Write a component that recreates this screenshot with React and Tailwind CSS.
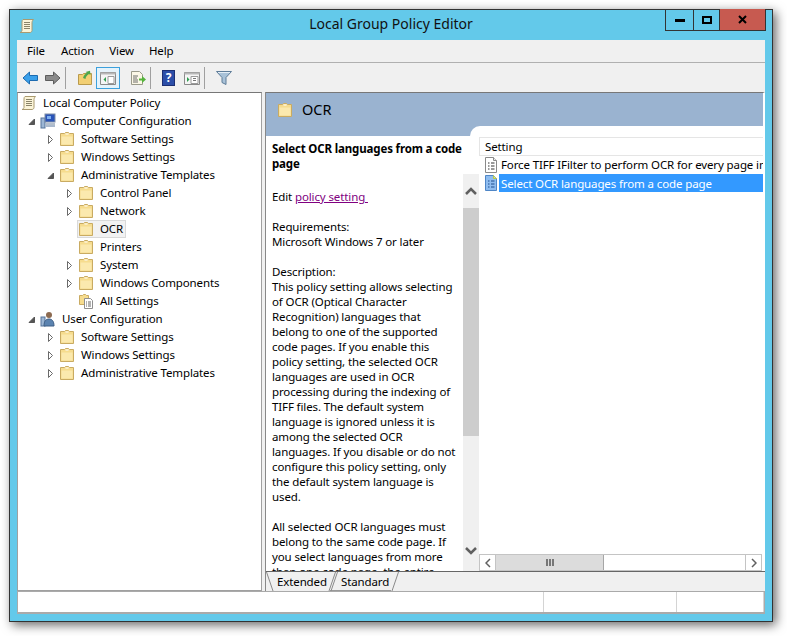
import React from 'react';

const Folder = ({ className = 'w-4 h-4 shrink-0' }) => (
  <svg viewBox="0 0 16 16" className={className}>
    <path d="M1.500 14.500v-12h4l1-1h3l1 1h4v12z" fill="#f6dc8e" stroke="#c9ab62" />
    <path d="M2.500 5.500h11v8h-11z" fill="#fbe9ae" />
    <path d="M6.500 2.500h3v1h-3z" fill="#fff" />
  </svg>
);

const Scroll = () => (
  <svg viewBox="0 0 16 16" className="w-4 h-4 shrink-0">
    <path d="M4 1.500h10.500c-1 1-1.500 2-1.500 3v8c0 1-1 2-2 2H1c1-.5 2-1 2-2V4c0-1 .2-2 1-2.500z" fill="#fbf4d8" stroke="#a99a70" />
    <path d="M5 4.500h6M5 6.500h6M5 8.500h6M5 10.500h6" stroke="#8a8468" />
  </svg>
);

const Computer = () => (
  <svg viewBox="0 0 16 16" className="w-4 h-4 shrink-0">
    <rect x="1" y="5" width="4" height="10" fill="#9cb6d4" stroke="#56759b" />
    <rect x="5" y="1" width="10" height="8" fill="#2a54b8" stroke="#7f8ea6" />
    <path d="M7 3h4v3H7z" fill="#7fb0f0" />
    <path d="M6 10h9v2H6z" fill="#b4bfcc" />
    <path d="M6 13h9" stroke="#56759b" />
  </svg>
);

const User = () => (
  <svg viewBox="0 0 16 16" className="w-4 h-4 shrink-0">
    <rect x="1" y="6" width="4" height="9" fill="#9cb6d4" stroke="#56759b" />
    <circle cx="9" cy="4" r="3" fill="#8c6a50" />
    <path d="M4 15c0-5 2-7 5-7s5 2 5 7z" fill="#5b83b0" stroke="#3f5f86" />
  </svg>
);

const AllSettings = () => (
  <svg viewBox="0 0 16 16" className="w-4 h-4 shrink-0">
    <path d="M1.500 11.500v-9h3l1-1h2l1 1h2v9z" fill="#f6dc8e" stroke="#c9ab62" />
    <path d="M6.500 5.500h6l2 2v8h-8z" fill="#fff" stroke="#8f8f8f" />
    <path d="M8 9h1M10 9h3M8 11h1M10 11h3M8 13h1M10 13h3" stroke="#666" />
  </svg>
);

const PolicyIcon = ({ selected }) => (
  <svg viewBox="0 0 16 18" className="w-4 h-[18px] shrink-0">
    <path d="M2.500 1.500h8l3 3v12h-11z" fill={selected ? '#8fbdf0' : '#fff'} stroke={selected ? '#4f86c6' : '#8a8a8a'} />
    <path d="M10.500 1.500v3h3" fill={selected ? '#e6f06a' : '#eee'} stroke={selected ? '#b8c84a' : '#8a8a8a'} />
    <path d="M5 7h1.500M8 7h3.500M5 10h1.500M8 10h3.500M5 13h1.500M8 13h3.500" stroke={selected ? '#1f4f8f' : '#333'} />
  </svg>
);

const Arrow = ({ state }) => (
  <span className="w-[9px] h-[9px] mr-[3px] flex items-center justify-center">
    {state === 'closed' && (
      <svg viewBox="0 0 9 9" className="w-[9px] h-[9px]">
        <path d="M2.500.500l4 4-4 4z" fill="#fff" stroke="#6a6a6a" />
      </svg>
    )}
    {state === 'open' && (
      <svg viewBox="0 0 9 9" className="w-[9px] h-[9px]">
        <path d="M7.500 2v5.500H2z" fill="#555" stroke="#555" />
      </svg>
    )}
  </span>
);

const depthClass = ['pl-[2px]', 'pl-[9px]', 'pl-[28px]', 'pl-[47px]'];

const TreeRow = ({ depth, arrow, icon, label, active }) => (
  <div className={`flex items-center h-[18px] ${depthClass[depth]}`}>
    {depth > 0 && <Arrow state={arrow} />}
    <span className={`flex items-center h-[18px] pr-[2px] border ${active ? 'bg-[#f2f2f2] border-[#d9d9d9]' : 'border-transparent'}`}>
      {icon}
      <span className="ml-[6px] leading-[16px]">{label}</span>
    </span>
  </div>
);

const tree = [
  { depth: 0, icon: <Scroll />, label: 'Local Computer Policy' },
  { depth: 1, arrow: 'open', icon: <Computer />, label: 'Computer Configuration' },
  { depth: 2, arrow: 'closed', icon: <Folder />, label: 'Software Settings' },
  { depth: 2, arrow: 'closed', icon: <Folder />, label: 'Windows Settings' },
  { depth: 2, arrow: 'open', icon: <Folder />, label: 'Administrative Templates' },
  { depth: 3, arrow: 'closed', icon: <Folder />, label: 'Control Panel' },
  { depth: 3, arrow: 'closed', icon: <Folder />, label: 'Network' },
  { depth: 3, icon: <Folder />, label: 'OCR', active: true },
  { depth: 3, icon: <Folder />, label: 'Printers' },
  { depth: 3, arrow: 'closed', icon: <Folder />, label: 'System' },
  { depth: 3, arrow: 'closed', icon: <Folder />, label: 'Windows Components' },
  { depth: 3, icon: <AllSettings />, label: 'All Settings' },
  { depth: 1, arrow: 'open', icon: <User />, label: 'User Configuration' },
  { depth: 2, arrow: 'closed', icon: <Folder />, label: 'Software Settings' },
  { depth: 2, arrow: 'closed', icon: <Folder />, label: 'Windows Settings' },
  { depth: 2, arrow: 'closed', icon: <Folder />, label: 'Administrative Templates' },
];

const Sep = ({ className }) => <div className={`w-px h-[22px] bg-[#a0a0a0] ${className}`} />;

const Toolbar = () => (
  <div className="flex items-center h-[29px] pl-[5px]">
    <svg viewBox="0 0 16 14" className="w-4 h-[14px]">
      <path d="M7.500 1L1 7l6.500 6V9.500h8v-5h-8z" fill="#3aa0ea" stroke="#1c6bb0" />
    </svg>
    <svg viewBox="0 0 16 14" className="w-4 h-[14px] ml-[7px]">
      <path d="M8.500 1L15 7l-6.500 6V9.500h-8v-5h8z" fill="#8a8a8a" stroke="#5c5c5c" />
    </svg>
    <Sep className="ml-[4px]" />
    <svg viewBox="0 0 16 16" className="w-4 h-4 ml-[11px]">
      <path d="M1.500 14.500v-10h4l1-1h8v11z" fill="#f2cf73" stroke="#b99a4c" />
      <path d="M6 8c1-3 2-4 4-5L8.500 2 13 .8 13.500 5 12 4c-2 1-3.500 3-3.500 5z" fill="#4ca64c" />
    </svg>
    <div className="flex items-center justify-center w-[24px] h-[22px] ml-[3px] bg-[#e5f3fb] border border-[#3ca0dc]">
      <svg viewBox="0 0 16 14" className="w-4 h-[14px]">
        <path d="M.500 1.500h15v12H.500z" fill="#f5f5f5" stroke="#8a8a8a" />
        <path d="M.500 1.500h15v2H.500z" fill="#b8b8b8" />
        <path d="M6 6v5L3.500 8.500z" fill="#2f9e4f" />
        <path d="M8 5.500h6v7H8z" fill="#fff" stroke="#9a9a9a" />
      </svg>
    </div>
    <svg viewBox="0 0 16 16" className="w-4 h-4 ml-[10px]">
      <path d="M1.500 1.500h8l3 3v10h-11z" fill="#fbf7e6" stroke="#9a9a8a" />
      <path d="M3 6h5M3 8h4M3 10h5M3 12h5" stroke="#6d6d6d" />
      <path d="M9 8.500h3V6l4 3.500-4 3.500v-2.500H9z" fill="#55b33c" />
    </svg>
    <Sep className="ml-[4px]" />
    <div className="flex items-center justify-center w-[13px] h-[16px] ml-[11px] bg-[#2c4ea8] border border-[#1d2f73] text-white font-bold text-[12px] leading-none">?</div>
    <svg viewBox="0 0 16 14" className="w-4 h-[14px] ml-[9px]">
      <path d="M.500 1.500h15v12H.500z" fill="#f5f5f5" stroke="#8a8a8a" />
      <path d="M.500 1.500h15v2H.500z" fill="#b8b8b8" />
      <path d="M3 6v5l2.500-2.500z" fill="#2f9e4f" />
      <path d="M7 5.500h7v7H7z" fill="#fff" stroke="#9a9a9a" />
      <path d="M9 7.500h3M9 9.500h3" stroke="#777" />
    </svg>
    <Sep className="ml-[4px]" />
    <svg viewBox="0 0 16 16" className="w-4 h-4 ml-[11px]">
      <path d="M.500 1.500h15l-5.500 6v7l-4-2v-5z" fill="#a9c2d8" stroke="#5e7c98" />
      <path d="M2 2.500h12" stroke="#e4eef6" />
    </svg>
  </div>
);

const descriptionLines = [
  'This policy setting allows selecting',
  'of OCR (Optical Character',
  'Recognition) languages that',
  'belong to one of the supported',
  'code pages. If you enable this',
  'policy setting, the selected OCR',
  'languages are used in OCR',
  'processing during the indexing of',
  'TIFF files. The default system',
  'language is ignored unless it is',
  'among the selected OCR',
  'languages. If you disable or do not',
  'configure this policy setting, only',
  'the default system language is',
  'used.',
];

const allSelectedLines = [
  'All selected OCR languages must',
  'belong to the same code page. If',
  'you select languages from more',
  'than one code page, the entire',
];

const Description = () => (
  <div className="w-[197px] h-full overflow-hidden bg-white pl-[6px] pt-[4px] leading-[15px] whitespace-nowrap">
    <p className="font-bold tracking-[-0.15px]">Select OCR languages from a code<br />page</p>
    <p className="mt-[18px]">Edit <span className="text-[#800080] underline">policy setting&nbsp;</span></p>
    <p className="mt-[15px]">Requirements:<br />Microsoft Windows 7 or later</p>
    <p className="mt-[15px]">Description:</p>
    {descriptionLines.map((line) => <p key={line}>{line}</p>)}
    <div className="mt-[15px]">
      {allSelectedLines.map((line) => <p key={line}>{line}</p>)}
    </div>
  </div>
);

const VScroll = () => (
  <div className="w-[16px] h-full flex flex-col bg-white">
    <div className="h-[37px]" />
    <div className="flex-1 flex flex-col bg-[#f0f0f0]">
      <div className="h-[34px] flex items-center justify-center">
        <svg viewBox="0 0 12 8" className="w-3 h-2"><path d="M1 7l5-5 5 5" fill="none" stroke="#606060" strokeWidth="2.500" /></svg>
      </div>
      <div className="h-[228px] bg-[#cdcdcd]" />
      <div className="flex-1 flex items-end justify-center pb-[16px]">
        <svg viewBox="0 0 12 8" className="w-3 h-2"><path d="M1 1l5 5 5-5" fill="none" stroke="#606060" strokeWidth="2.500" /></svg>
      </div>
    </div>
  </div>
);

const HScroll = () => (
  <div className="flex items-stretch h-[17px] mr-[1px] bg-white border border-[#c4c4c4]">
    <div className="w-[16px] flex items-center justify-center border-r border-[#c4c4c4]">
      <svg viewBox="0 0 6 10" className="w-[6px] h-[10px]"><path d="M5 1L1 5l4 4" fill="none" stroke="#606060" strokeWidth="1.500" /></svg>
    </div>
    <div className="w-[108px] bg-[#dcdcdc] border-r border-[#a6a6a6] flex items-center justify-center gap-px">
      <span className="w-[2px] h-[7px] bg-[#777]" />
      <span className="w-[2px] h-[7px] bg-[#777]" />
      <span className="w-[2px] h-[7px] bg-[#777]" />
    </div>
    <div className="flex-1" />
    <div className="w-[16px] flex items-center justify-center border-l border-[#c4c4c4]">
      <svg viewBox="0 0 6 10" className="w-[6px] h-[10px]"><path d="M1 1l4 4-4 4" fill="none" stroke="#606060" strokeWidth="1.500" /></svg>
    </div>
  </div>
);

const SettingsList = () => (
  <div className="flex-1 min-w-0 h-full flex flex-col bg-white overflow-hidden">
    <div className="h-[19px] shrink-0 flex items-center pl-[5px] border border-r-0 border-[#e5e5e5] leading-[16px]">Setting</div>
    <div className="flex-1 whitespace-nowrap">
      <div className="flex items-center h-[18px] pl-[4px]">
        <PolicyIcon />
        <span className="ml-[2px] leading-[16px]">Force TIFF IFilter to perform OCR for every page in TIFF file</span>
      </div>
      <div className="flex items-center h-[18px] pl-[4px]">
        <PolicyIcon selected />
        <span className="pl-[2px] flex-1 h-[18px] bg-[#3399ff] text-white leading-[20px]">Select OCR languages from a code page</span>
      </div>
    </div>
    <HScroll />
  </div>
);

const TabSlant = ({ flip }) => (
  <svg viewBox="0 0 8 19" className="w-2 h-[19px] shrink-0">
    <path d={flip ? 'M7.500 0L1 19' : 'M.500 0L7 19'} stroke="#8a8a8a" fill="none" />
  </svg>
);

const Tabs = () => (
  <div className="h-[19px] flex items-start bg-[#f0f0f0] border-t border-[#666] box-content">
    <TabSlant />
    <span className="w-[51px] ml-[3px] leading-[20px]">Extended</span>
    <TabSlant flip />
    <div className="flex items-start border-b border-[#9a9a9a] h-[19px] -ml-[6px]">
      <TabSlant flip />
      <span className="w-[50px] ml-[3px] leading-[20px]">Standard</span>
    </div>
    <TabSlant flip />
  </div>
);

const WindowButtons = () => (
  <div className="flex items-stretch h-[22px] mr-[6px] -mt-px border border-t-0 border-[#333]">
    <div className="w-[28px] flex items-center justify-center border-r border-[#333]">
      <span className="w-[10px] h-[3px] bg-black mt-[2px]" />
    </div>
    <div className="w-[26px] flex items-center justify-center border-r border-[#333]">
      <span className="w-[10px] h-[8px] border-2 border-black" />
    </div>
    <div className="w-[45px] flex items-center justify-center bg-[#c75a50]">
      <svg viewBox="0 0 9 9" className="w-[9px] h-[9px]"><path d="M1 1l7 7M8 1L1 8" stroke="#000" strokeWidth="2" /></svg>
    </div>
  </div>
);

export default function App() {
  return (
    <div className="w-[787px] h-[636px] bg-white overflow-hidden pt-[9px] pl-[9px] text-[11.5px] tracking-[-0.12px] text-black [font-family:'Noto_Sans',sans-serif]">
      <div className="w-[764px] h-[613px] flex flex-col bg-[#63c9ea] border border-[#333] shadow-[3px_3px_10px_rgba(0,0,0,0.6)]">
        <div className="relative h-[30px] shrink-0 flex items-start justify-end">
          <div className="absolute left-[9px] top-[8px]"><Scroll /></div>
          <div className="absolute inset-x-0 top-[4px] text-center text-[14px] tracking-normal leading-[20px] text-[#111]">Local Group Policy Editor</div>
          <WindowButtons />
        </div>
        <div className="mx-[7px] mb-[7px] flex-1 min-h-0 flex flex-col bg-[#f0f0f0]">
          <div className="h-[23px] shrink-0 flex items-center gap-[15px] pl-[10px] border-b border-[#b0b0b0]">
            <span className="mr-px">File</span>
            <span>Action</span>
            <span>View</span>
            <span>Help</span>
          </div>
          <Toolbar />
          <div className="flex-1 min-h-0 flex">
            <div className="w-[245px] h-full shrink-0 bg-white border border-[#a0a0a0] border-t-[#777] pt-px">
              {tree.map((row, i) => <TreeRow key={i} {...row} />)}
            </div>
            <div className="w-[3px] shrink-0" />
            <div className="flex-1 min-w-0 h-full flex flex-col border-l border-[#888]">
              <div className="flex-1 min-h-0 flex flex-col bg-[#9ab3d0] border-t border-[#777] border-r-2 border-r-white">
                <div className="h-[33px] shrink-0 flex items-center pl-[11px]">
                  <Folder />
                  <span className="ml-[9px] -mt-[2px] text-[14.5px] tracking-normal leading-[20px]">OCR</span>
                </div>
                <div className="h-[11px] shrink-0 flex">
                  <div className="w-[204px] mt-[10px] h-px bg-white" />
                  <div className="flex-1 bg-white rounded-tl-[10px]" />
                </div>
                <div className="flex-1 min-h-0 flex bg-white">
                  <Description />
                  <VScroll />
                  <SettingsList />
                </div>
              </div>
              <Tabs />
            </div>
          </div>
          <div className="h-[23px] shrink-0 flex bg-white border border-[#aaa] border-b-2">
            <div className="w-[526px] border-r border-[#d4d4d4]" />
            <div className="w-[133px] border-r border-[#d4d4d4]" />
            <div className="flex-1 border-r border-[#d4d4d4]" />
          </div>
        </div>
      </div>
    </div>
  );
}
